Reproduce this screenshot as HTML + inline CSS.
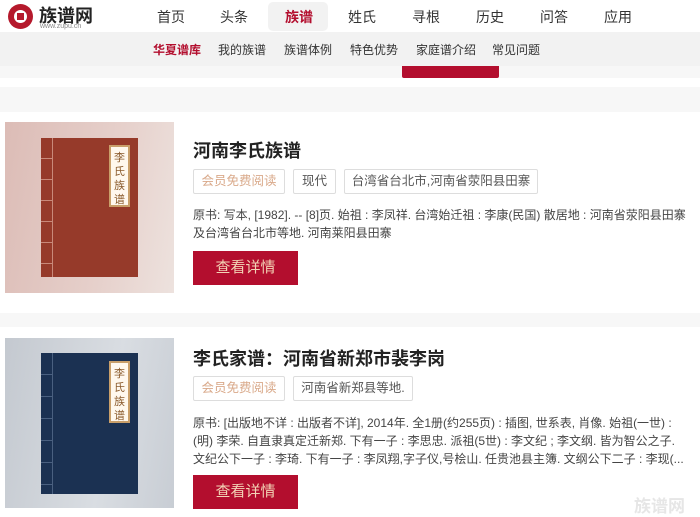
<!DOCTYPE html>
<html><head><meta charset="utf-8"><style>
*{margin:0;padding:0;box-sizing:border-box}
body{width:700px;height:515px;overflow:hidden;background:#fff;font-family:"Liberation Sans","Noto Sans CJK SC",sans-serif;position:relative;color:#333}
.a{position:absolute}
.nav span{position:absolute;top:7px;font-size:14px;color:#333}
.sub span{position:absolute;top:41px;font-size:12px;color:#333}
.tag{position:absolute;height:25px;border:1px solid #ddd;border-radius:2px;font-size:12.5px;line-height:23px;text-align:center;color:#555;white-space:nowrap}
.tag.m{color:#d9a98a}
.title{position:absolute;left:193px;font-size:18px;font-weight:bold;color:#222}
.desc{position:absolute;left:193px;width:500px;font-size:12px;line-height:18px;color:#444}
.btn{position:absolute;left:193px;width:105px;height:34px;background:#b30e2e;color:#f3d3b5;font-size:15px;line-height:34px;text-align:center}
.book{position:absolute}
.lbl{position:absolute;background:#fff8ee;border:2px solid #c99f6a;width:21px;font-size:11px;line-height:14px;text-align:center;color:#8a5a2c;padding-top:4px}
</style></head><body>
<!-- header -->
<div class="a" style="left:8px;top:4px;width:25px;height:25px;border-radius:50%;background:#b5192c"></div>
<div class="a" style="left:14px;top:10px;width:13px;height:13px;border-radius:50%;background:#fff"></div>
<div class="a" style="left:17px;top:13px;width:7px;height:7px;background:#b5192c"></div>
<div class="a" style="left:39px;top:2px;font-size:18px;font-weight:bold;color:#222">族谱网</div>
<div class="a" style="left:40px;top:23px;font-size:7px;color:#888">www.zupu.cn</div>
<div class="a" style="left:268px;top:2px;width:60px;height:29px;background:#f2f2f2;border-radius:5px"></div>
<div class="nav">
<span style="left:157px">首页</span><span style="left:220px">头条</span><span style="left:285px;color:#b30e2e;font-weight:bold">族谱</span><span style="left:348px">姓氏</span><span style="left:412px">寻根</span><span style="left:476px">历史</span><span style="left:540px">问答</span><span style="left:604px">应用</span>
</div>
<div class="a" style="left:0;top:32px;width:700px;height:34px;background:#f2f2f2"></div>
<div class="sub">
<span style="left:153px;color:#b30e2e;font-weight:bold">华夏谱库</span><span style="left:218px">我的族谱</span><span style="left:284px">族谱体例</span><span style="left:350px">特色优势</span><span style="left:416px">家庭谱介绍</span><span style="left:492px">常见问题</span>
</div>
<div class="a" style="left:0;top:66px;width:700px;height:12px;background:#f7f7f7"></div>
<div class="a" style="left:402px;top:66px;width:97px;height:12px;background:#b30e2e;border-radius:0 0 2px 2px"></div>
<div class="a" style="left:0;top:87px;width:700px;height:25px;background:#f7f7f7"></div>

<!-- card 1 -->
<div class="a" style="left:5px;top:122px;width:169px;height:171px;background:linear-gradient(100deg,#dcbcb6,#e6d0cb 60%,#ede2de)"></div>
<div class="book" style="left:41px;top:138px;width:97px;height:139px;background:#963a2a"></div>
<div class="book" style="left:41px;top:138px;width:12px;height:139px;border-right:1px solid #c9897a;background:repeating-linear-gradient(#963a2a 0 20px,#c9897a 20px 21px)"></div>
<div class="lbl" style="left:109px;top:145px;height:62px">李氏族谱</div>
<div class="title" style="top:137px">河南李氏族谱</div>
<div class="tag m" style="left:193px;top:169px;width:92px">会员免费阅读</div>
<div class="tag" style="left:293px;top:169px;width:43px">现代</div>
<div class="tag" style="left:344px;top:169px;width:194px">台湾省台北市,河南省荥阳县田寨</div>
<div class="desc" style="top:206px">原书: 写本, [1982]. -- [8]页. 始祖 : 李凤祥. 台湾始迁祖 : 李康(民国) 散居地 : 河南省荥阳县田寨及台湾省台北市等地. 河南莱阳县田寨</div>
<div class="btn" style="top:251px">查看详情</div>

<div class="a" style="left:0;top:313px;width:700px;height:14px;background:#f7f7f7"></div>

<!-- card 2 -->
<div class="a" style="left:5px;top:338px;width:169px;height:170px;background:linear-gradient(100deg,#c4c9d0,#d9dde2 60%,#c8cdd4)"></div>
<div class="book" style="left:41px;top:353px;width:97px;height:141px;background:#1b3152"></div>
<div class="book" style="left:41px;top:353px;width:12px;height:141px;border-right:1px solid #4a6080;background:repeating-linear-gradient(#1b3152 0 21px,#4a6080 21px 22px)"></div>
<div class="lbl" style="left:109px;top:361px;height:62px">李氏族谱</div>
<div class="title" style="top:345px">李氏家谱：河南省新郑市裴李岗</div>
<div class="tag m" style="left:193px;top:376px;width:92px">会员免费阅读</div>
<div class="tag" style="left:293px;top:376px;width:120px">河南省新郑县等地.</div>
<div class="desc" style="top:414px;white-space:nowrap">原书: [出版地不详 : 出版者不详], 2014年. 全1册(约255页) : 插图, 世系表, 肖像. 始祖(一世) :<br>(明) 李荣. 自直隶真定迁新郑. 下有一子 : 李思忠. 派祖(5世) : 李文纪 ; 李文纲. 皆为智公之子.<br>文纪公下一子 : 李琦. 下有一子 : 李凤翔,字子仪,号桧山. 任贵池县主簿. 文纲公下二子 : 李现(...</div>
<div class="btn" style="top:475px">查看详情</div>
<div class="a" style="left:634px;top:492px;font-size:17px;color:#e6e6e6;font-weight:bold">族谱网</div>
</body></html>
